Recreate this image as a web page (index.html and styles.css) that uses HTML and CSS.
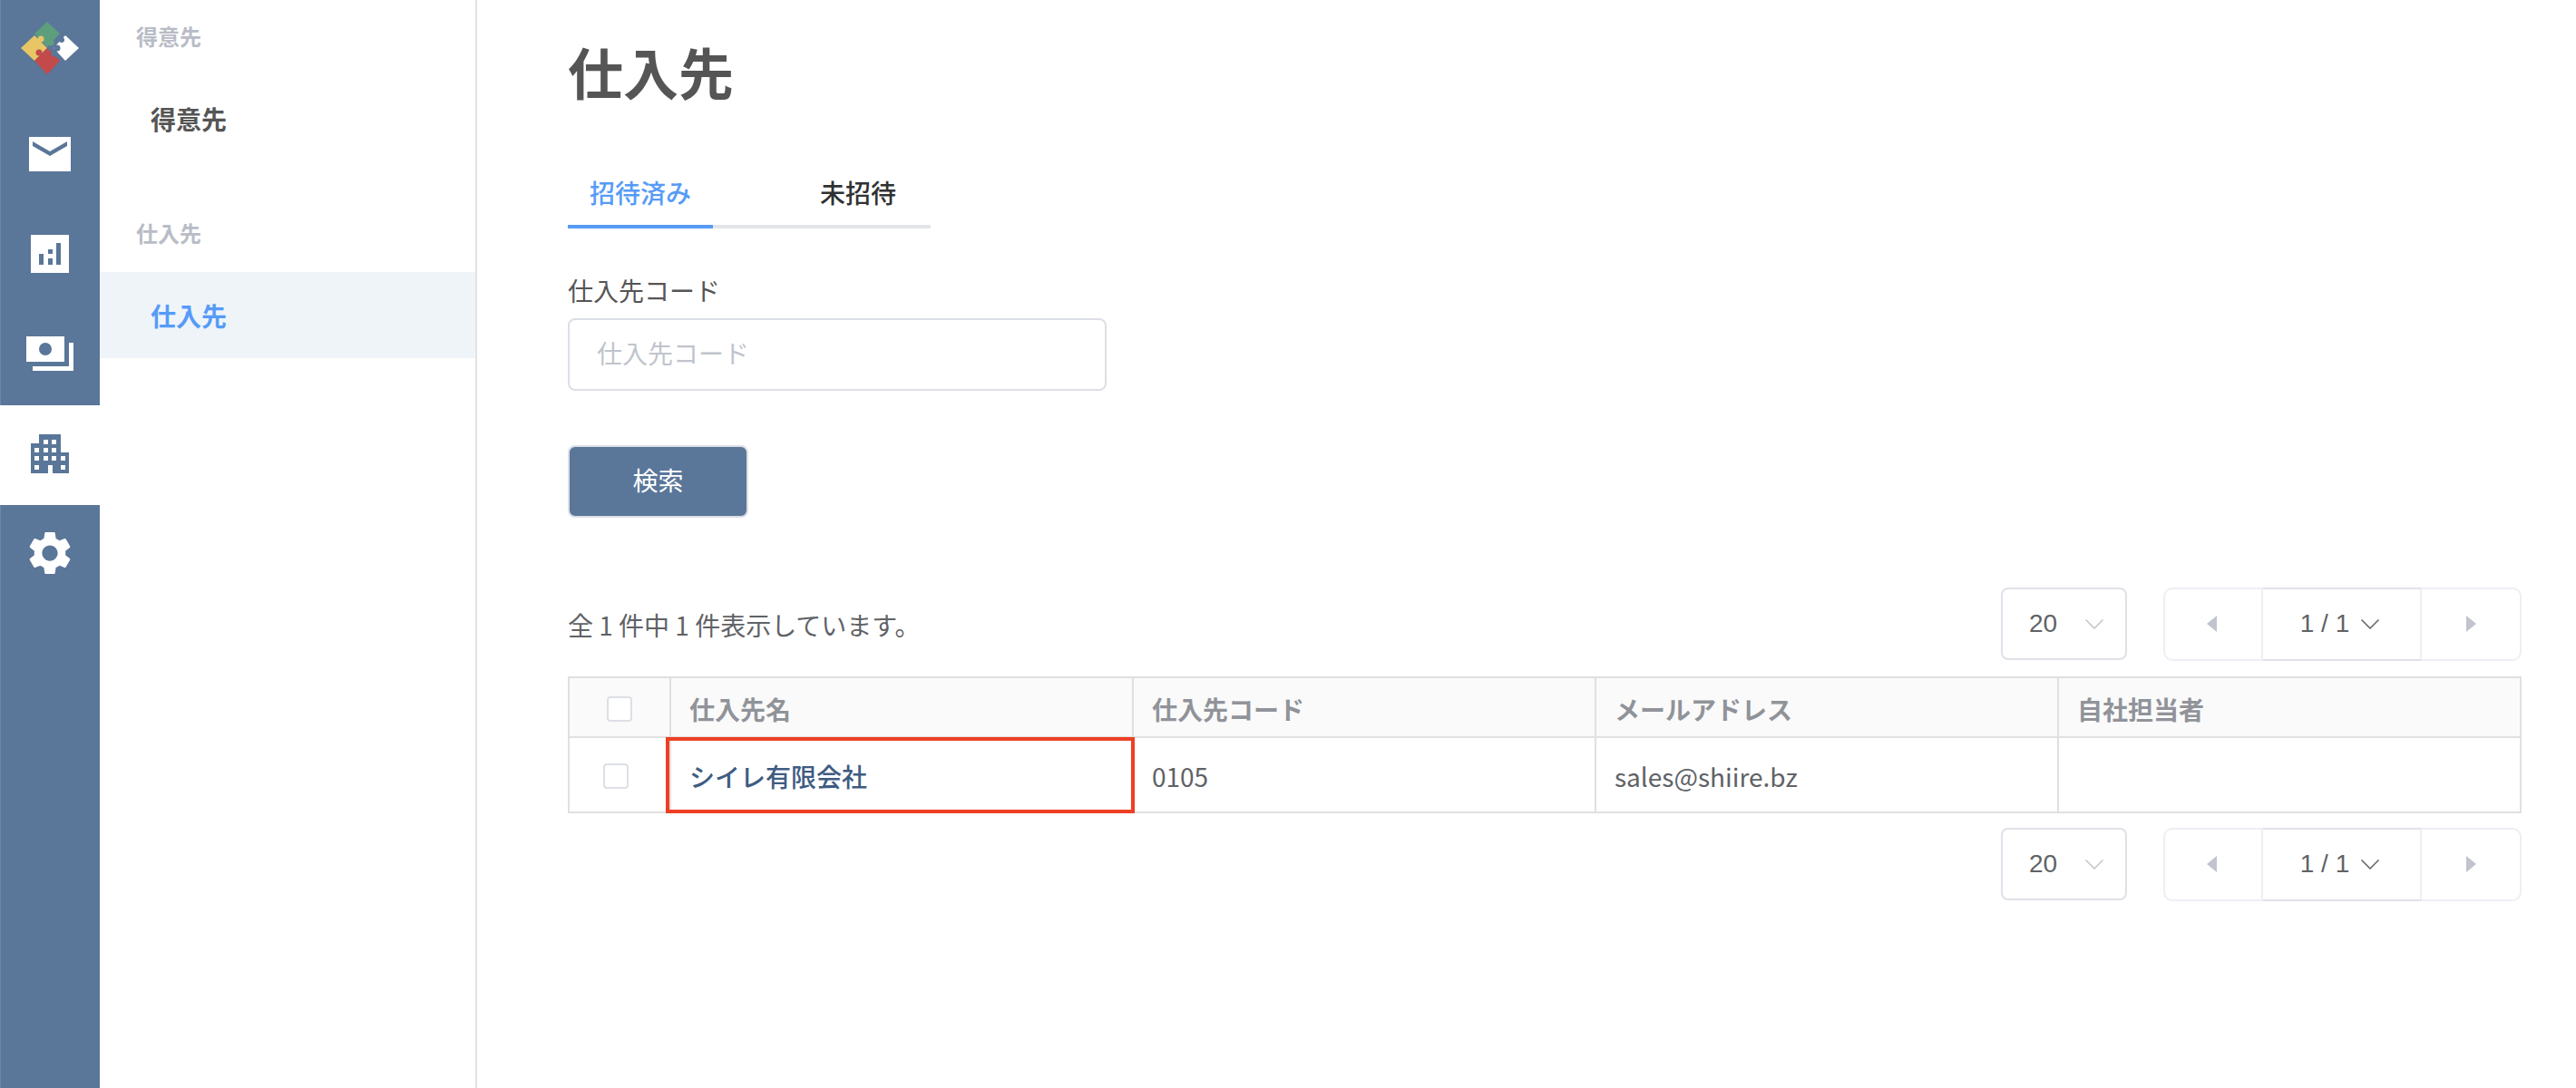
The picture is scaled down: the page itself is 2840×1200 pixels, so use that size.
FILE: index.html
```html
<!DOCTYPE html>
<html lang="ja">
<head>
<meta charset="utf-8">
<title>仕入先</title>
<link rel="stylesheet" href="styles.css">
</head>
<body>
<div class="app">
  <nav class="rail">
    <div class="rail-logo">
      <svg width="64" height="58" viewBox="0 0 64 58">
        <polygon points="29,0 43,13 29,28 15,13" fill="#5d9e7c"/>
        <polygon points="15,15 0,29 15,43 29,29" fill="#e8c565"/>
        <circle cx="22" cy="19" r="3.5" fill="#e8c565"/>
        <polygon points="29,29 15,43 29,58 43,43" fill="#c24a4a"/>
        <circle cx="20" cy="34" r="3.5" fill="#c24a4a"/>
        <circle cx="33" cy="23" r="3.5" fill="#5d9e7c"/>
        <polygon points="49,15 36,29 49,43 64,29" fill="#fff"/>
        <circle cx="40" cy="29" r="3.5" fill="#5a7699"/>
        <circle cx="45" cy="20" r="3" fill="#5a7699"/>
        <circle cx="37" cy="35" r="3.5" fill="#5a7699"/>
      </svg>
    </div>
    <a class="rail-item">
      <svg width="46" height="38" viewBox="0 0 46 38">
        <rect width="46" height="38" fill="#fff"/>
        <polygon points="4,5 23,16 42,5 42,10 23,21 4,10" fill="#5a7699"/>
      </svg>
    </a>
    <a class="rail-item">
      <svg width="42" height="42" viewBox="0 0 42 42">
        <rect width="42" height="42" fill="#fff"/>
        <path d="M9 21h5v12H9zM19 16h5v5h-5zM19 26h5v7h-5zM28 9h5v24h-5z" fill="#5a7699"/>
      </svg>
    </a>
    <a class="rail-item">
      <svg width="52" height="38" viewBox="0 0 52 38">
        <rect width="42" height="28" fill="#fff"/>
        <circle cx="21" cy="14" r="7" fill="#5a7699"/>
        <path d="M47 7h5v31H7v-5h40z" fill="#fff"/>
      </svg>
    </a>
    <a class="rail-item rail-item-active">
      <svg width="42" height="43" viewBox="0 0 42 43">
        <path fill="#5a7699" fill-rule="evenodd" d="M9 0h24v20h9v23H24v-9h-5v9H0V10h9zM14 6v5h5V6zM23 6v5h5V6zM4 15v5h5v-5zM14 15v5h5v-5zM23 15v5h5v-5zM4 24v5h5v-5zM14 24v5h5v-5zM23 24v5h5v-5zM33 24v5h5v-5zM4 34v5h5v-5zM33 34v5h5v-5z"/>
      </svg>
    </a>
    <a class="rail-item">
      <svg width="46" height="48" viewBox="2.4 2 19.2 20">
        <path fill="#fff" d="M19.14 12.94c.04-.3.06-.61.06-.94 0-.32-.02-.64-.07-.94l2.03-1.58a.49.49 0 0 0 .12-.61l-1.92-3.32a.488.488 0 0 0-.59-.22l-2.39.96c-.5-.38-1.03-.7-1.62-.94l-.36-2.54a.484.484 0 0 0-.48-.41h-3.84c-.24 0-.43.17-.47.41l-.36 2.54c-.59.24-1.13.57-1.62.94l-2.39-.96c-.22-.08-.47 0-.59.22L2.74 8.87c-.12.21-.08.47.12.61l2.03 1.58c-.05.3-.09.63-.09.94s.02.64.07.94l-2.03 1.58a.49.49 0 0 0-.12.61l1.92 3.32c.12.22.37.29.59.22l2.39-.96c.5.38 1.03.7 1.62.94l.36 2.54c.05.24.24.41.48.41h3.84c.24 0 .44-.17.47-.41l.36-2.54c.59-.24 1.13-.56 1.62-.94l2.39.96c.22.08.47 0 .59-.22l1.92-3.32c.12-.22.07-.47-.12-.61l-2.01-1.58zM12 15.6c-1.98 0-3.6-1.62-3.6-3.6s1.62-3.6 3.6-3.6 3.6 1.62 3.6 3.6-1.62 3.6-3.6 3.6z"/>
      </svg>
    </a>
  </nav>

  <aside class="side">
    <div class="side-group">
      <div class="side-label">得意先</div>
      <a class="side-item">得意先</a>
    </div>
    <div class="side-group">
      <div class="side-label">仕入先</div>
      <a class="side-item side-item-active">仕入先</a>
    </div>
  </aside>

  <main class="main">
    <h1 class="title">仕入先</h1>

    <div class="tabs">
      <a class="tab tab-active">招待済み</a>
      <a class="tab tab-rest">未招待</a>
    </div>

    <label class="field-label" for="code">仕入先コード</label>
    <input class="field-input" id="code" type="text" placeholder="仕入先コード">

    <button class="search-btn" type="button">検索</button>

    <div class="toolbar toolbar-top">
      <p class="count">全 1 件中 1 件表示しています。</p>
      <div class="controls">
        <div class="size-select">
          <span>20</span>
          <svg class="chev" width="20" height="11" viewBox="0 0 20 11"><polyline points="0.5,0.5 10,10 19.5,0.5" fill="none" stroke="#c0c4cc" stroke-width="1.5"/></svg>
        </div>
        <div class="pager">
          <span class="pager-btn pager-prev"><i class="tri-left"></i></span>
          <span class="pager-mid">1 / 1
            <svg width="20" height="11" viewBox="0 0 20 11"><polyline points="0.5,0.5 10,10 19.5,0.5" fill="none" stroke="#606266" stroke-width="1.5"/></svg>
          </span>
          <span class="pager-btn pager-next"><i class="tri-right"></i></span>
        </div>
      </div>
    </div>

    <table class="grid">
      <colgroup>
        <col class="col-check"><col class="col-data"><col class="col-data"><col class="col-data"><col class="col-data">
      </colgroup>
      <thead>
        <tr>
          <th class="cell-check"><span class="checkbox checkbox-head"></span></th>
          <th>仕入先名</th>
          <th>仕入先コード</th>
          <th>メールアドレス</th>
          <th>自社担当者</th>
        </tr>
      </thead>
      <tbody>
        <tr>
          <td class="cell-check"><span class="checkbox checkbox-row"></span></td>
          <td class="cell-name"><a class="name-link">シイレ有限会社</a><span class="highlight"></span></td>
          <td>0105</td>
          <td>sales@shiire.bz</td>
          <td></td>
        </tr>
      </tbody>
    </table>

    <div class="toolbar toolbar-bottom">
      <div class="controls">
        <div class="size-select">
          <span>20</span>
          <svg class="chev" width="20" height="11" viewBox="0 0 20 11"><polyline points="0.5,0.5 10,10 19.5,0.5" fill="none" stroke="#c0c4cc" stroke-width="1.5"/></svg>
        </div>
        <div class="pager">
          <span class="pager-btn pager-prev"><i class="tri-left"></i></span>
          <span class="pager-mid">1 / 1
            <svg width="20" height="11" viewBox="0 0 20 11"><polyline points="0.5,0.5 10,10 19.5,0.5" fill="none" stroke="#606266" stroke-width="1.5"/></svg>
          </span>
          <span class="pager-btn pager-next"><i class="tri-right"></i></span>
        </div>
      </div>
    </div>
  </main>
</div>
</body>
</html>
```
FILE: styles.css
```css
* { box-sizing: border-box; }
html, body { margin: 0; height: 100%; background: #fff; overflow: hidden; }
body { font-family: "Noto Sans CJK JP", "Noto Sans", sans-serif; font-size: 28px; color: #606266; }

.app { display: flex; height: 1200px; }

/* icon rail */
.rail { width: 110px; flex: none; background: #5a7699; border-left: 1px solid #6d87a6; display: flex; flex-direction: column; }
.rail-logo { height: 117px; display: flex; justify-content: center; padding: 24px 0 0 0; margin-left: -1px; }
.rail-item { height: 110px; margin-left: -1px; padding-bottom: 4px; display: flex; align-items: center; justify-content: center; }
.rail-item-active { background: #fff; }

/* secondary menu */
.side { width: 416px; flex: none; border-right: 2px solid #e2e3e6; padding-top: 20px; }
.side-group + .side-group { margin-top: 59px; }
.side-label { padding-left: 40px; font-size: 24px; line-height: 40px; font-weight: 700; color: #b8bcc6; margin-bottom: 23px; }
.side-item { display: flex; align-items: center; height: 95px; padding-left: 56px; font-size: 28px; font-weight: 700; color: #555; }
.side-item-active { background: #eff4f9; color: #569bf7; }

/* main */
.main { flex: 1; min-width: 0; padding: 49px 60px 0 100px; }
.title { margin: 0; font-size: 61px; line-height: 60px; font-weight: 700; color: #555; }

.tabs { display: flex; width: 400px; margin-top: 83px; border-bottom: 4px solid #e4e5ea; height: 60px; }
.tab { font-size: 28px; line-height: 40px; height: 60px; padding-bottom: 16px; font-weight: 500; border-bottom: 4px solid transparent; }
.tab-active { width: 160px; padding-left: 24px; color: #569bf7; border-bottom-color: #569bf7; }
.tab-rest { padding-left: 118px; color: #303133; }

.field-label { display: block; margin-top: 48px; font-size: 28px; line-height: 40px; color: #555; }
.field-input { display: block; width: 594px; height: 80px; margin-top: 11px; padding: 0 30px 4px; border: 2px solid #dcdfe6; border-radius: 8px; font: inherit; color: #606266; outline: none; }
.field-input::placeholder { color: #c0c4cc; opacity: 1; }

.search-btn { display: block; width: 199px; height: 80px; margin-top: 60px; padding: 0 0 4px; background: #5a7699; border: 2px solid #dcdfe6; border-radius: 8px; color: #fff; font: inherit; }

.toolbar { display: flex; align-items: center; justify-content: space-between; height: 82px; }
.toolbar-top { margin-top: 76px; }
.toolbar-bottom { margin-top: 15px; justify-content: flex-end; }
.count { margin: 0; padding-top: 2px; font-size: 28px; line-height: 40px; color: #606266; }
.controls { display: flex; align-items: center; gap: 40px; }

.size-select { width: 139px; height: 80px; padding: 0 24px 0 29px; display: flex; align-items: center; justify-content: space-between; border: 2px solid #e0e1e8; border-radius: 8px; font-family: "Liberation Sans", sans-serif; color: #606266; }

.pager { width: 395px; height: 81px; display: flex; font-family: "Liberation Sans", sans-serif; color: #606266; }
.pager-btn { width: 110px; flex: none; display: flex; align-items: center; justify-content: center; border: 2px solid #eeeef5; }
.pager-prev { border-radius: 10px 0 0 10px; }
.pager-next { border-radius: 0 10px 10px 0; border-left: 0; }
.pager-mid { flex: 1; display: flex; align-items: center; justify-content: center; gap: 13px; padding-right: 4px; border-top: 2px solid #e0e1e8; border-bottom: 2px solid #e0e1e8; border-right: 2px solid #eeeef5; }
.tri-left { width: 0; height: 0; margin-left: -4px; border-style: solid; border-width: 9px 11px 9px 0; border-color: transparent #c0c4cc transparent transparent; }
.tri-right { width: 0; height: 0; border-style: solid; border-width: 9px 0 9px 11px; border-color: transparent transparent transparent #c0c4cc; }

/* table */
.grid { width: 2152px; margin-top: 17px; border-collapse: collapse; table-layout: fixed; }
.col-check { width: 112px; }
.col-data { width: 510px; }
.grid th, .grid td { border: 2px solid #e0e0e0; padding: 3px 20px 0; text-align: left; font-size: 28px; }
.grid th { height: 66px; background: #fafafa; color: #909399; font-weight: 700; }
.grid td { height: 83px; color: #606266; font-weight: 400; }
.grid .cell-check { padding: 3px 0 0; }
.checkbox { display: block; width: 28px; height: 28px; background: #fff; border: 2px solid #dcdfe6; border-radius: 4px; }
.checkbox-head { margin-left: 41px; }
.checkbox-row { margin-left: 37px; }
.cell-name { position: relative; }
.name-link { font-weight: 500; color: #3e5c82; }
.highlight { position: absolute; top: -1px; left: -6px; right: -3px; bottom: -2px; border: 4px solid #ee3f24; }
```
